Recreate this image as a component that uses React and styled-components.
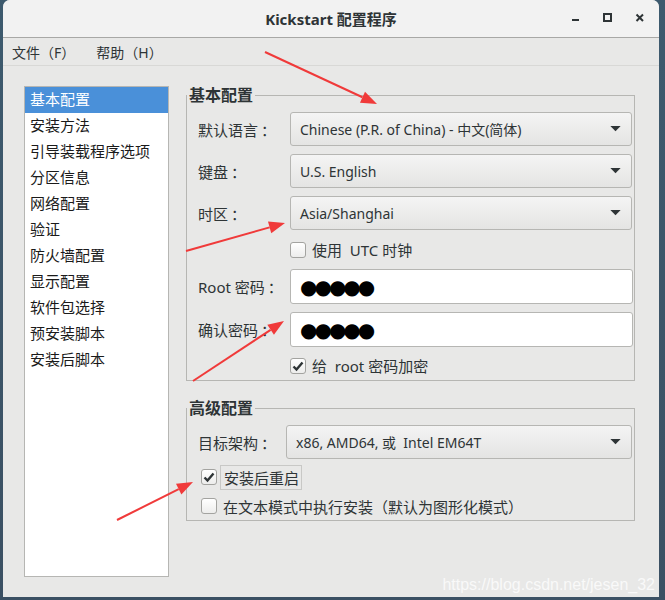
import styled, { createGlobalStyle } from "styled-components"

const GlobalStyle = createGlobalStyle`
  html, body {
    margin: 0;
    padding: 0;
    background: #3b5468;
  }
  body {
    font-family: "Noto Sans", "Noto Sans CJK SC", sans-serif;
    color: #2e3436;
  }
`

const sections = [
  "基本配置", "安装方法", "引导装载程序选项", "分区信息", "网络配置", "验证",
  "防火墙配置", "显示配置", "软件包选择", "预安装脚本", "安装后脚本",
]

export default function App() {
  return (
    <>
      <GlobalStyle />
      <Desktop>
        <Window>
          <TitleBar>
            <Title>Kickstart 配置程序</Title>
            <Controls>
              <ControlButton>
                <svg width="10" height="10" viewBox="0 0 10 10"><rect x="1" y="6" width="7" height="2" fill="#2e3436" /></svg>
              </ControlButton>
              <ControlButton>
                <svg width="10" height="10" viewBox="0 0 10 10"><rect x="1" y="1" width="7" height="7" fill="none" stroke="#2e3436" strokeWidth="2" /></svg>
              </ControlButton>
              <ControlButton>
                <svg width="10" height="10" viewBox="0 0 10 10"><path d="M1.5 1.5 L8 8 M8 1.5 L1.5 8" stroke="#2e3436" strokeWidth="2" /></svg>
              </ControlButton>
            </Controls>
          </TitleBar>

          <MenuBar>
            <MenuItem>文件（F）</MenuItem>
            <MenuItem>帮助（H）</MenuItem>
          </MenuBar>

          <Body>
            <SideList>
              {sections.map((s, i) => (
                <SideItem key={s} $active={i === 0}>{s}</SideItem>
              ))}
            </SideList>

            <Panel>
              <Frame $bottom={4}>
                <Legend>基本配置</Legend>
                <FormGrid $labelWidth={92}>
                  <Label>默认语言<Colon>：</Colon></Label>
                  <Combo>Chinese (P.R. of China) - 中文(简体)<Arrow /></Combo>
                  <Label>键盘<Colon>：</Colon></Label>
                  <Combo>U.S. English<Arrow /></Combo>
                  <Label>时区<Colon>：</Colon></Label>
                  <Combo>Asia/Shanghai<Arrow /></Combo>
                  <span />
                  <CheckRow $height={39}>
                    <CheckBox />
                    <CheckText>使用&nbsp; UTC 时钟</CheckText>
                  </CheckRow>
                  <Label>Root 密码<Colon>：</Colon></Label>
                  <Entry>●●●●●</Entry>
                  <Label>确认密码<Colon>：</Colon></Label>
                  <Entry>●●●●●</Entry>
                  <span />
                  <CheckRow $height={37}>
                    <CheckBox $checked><Tick /></CheckBox>
                    <CheckText>给&nbsp; root 密码加密</CheckText>
                  </CheckRow>
                </FormGrid>
              </Frame>

              <Frame $bottom={0}>
                <Legend>高级配置</Legend>
                <FormGrid $labelWidth={88}>
                  <Label>目标架构<Colon>：</Colon></Label>
                  <Combo>x86, AMD64, 或&nbsp; Intel EM64T<Arrow /></Combo>
                </FormGrid>
                <PlainChecks>
                  <CheckRow $height={30}>
                    <CheckBox $checked><Tick /></CheckBox>
                    <FocusText>安装后重启</FocusText>
                  </CheckRow>
                  <CheckRow $height={28}>
                    <CheckBox />
                    <CheckText>在文本模式中执行安装（默认为图形化模式）</CheckText>
                  </CheckRow>
                </PlainChecks>
              </Frame>
            </Panel>
          </Body>
        </Window>

        <Watermark>https://blog.csdn.net/jesen_32</Watermark>
        <Annotations width="665" height="600" viewBox="0 0 665 600">
          <RedArrow x1={265} y1={52} x2={377} y2={104} />
          <RedArrow x1={186} y1={251} x2={285} y2={223} />
          <RedArrow x1={193} y1={381} x2={284} y2={321} />
          <RedArrow x1={117} y1={520} x2={193} y2={482} />
        </Annotations>
      </Desktop>
    </>
  )
}

function Arrow() {
  return (
    <ArrowIcon width="12" height="7" viewBox="0 0 12 7">
      <path d="M0 0 H12 L6 6 Z" fill="#2e3436" />
    </ArrowIcon>
  )
}

function Tick() {
  return (
    <svg width="12" height="12" viewBox="0 0 12 12">
      <path d="M1.5 6.5 L4.5 9.5 L10.5 2.5" fill="none" stroke="#2e3436" strokeWidth="2.4" />
    </svg>
  )
}

function RedArrow({ x1, y1, x2, y2 }) {
  const ang = Math.atan2(y2 - y1, x2 - x1)
  const len = 16
  const w = 6
  const bx = x2 - Math.cos(ang) * len
  const by = y2 - Math.sin(ang) * len
  const px = -Math.sin(ang) * w
  const py = Math.cos(ang) * w
  return (
    <g>
      <line x1={x1} y1={y1} x2={bx} y2={by} stroke="#f03a3a" strokeWidth="2" />
      <polygon points={`${x2},${y2} ${bx + px},${by + py} ${bx - px},${by - py}`} fill="#f03a3a" />
    </g>
  )
}

const Desktop = styled.div`
  position: relative;
  width: 665px;
  height: 600px;
  padding: 0 6px 3px 3px;
  box-sizing: border-box;
  background: linear-gradient(180deg, #3d5a6e 0%, #3b5063 100%);
  overflow: hidden;
`
const Window = styled.div`
  height: 100%;
  display: flex;
  flex-direction: column;
  background: #e8e8e7;
  border-radius: 7px 7px 0 0;
  overflow: hidden;
`
const TitleBar = styled.div`
  height: 37px;
  flex: none;
  background: #f2f2f2;
  border-bottom: 1px solid #a8a8a6;
  display: flex;
  align-items: center;
  justify-content: center;
  position: relative;
`
const Title = styled.div`
  font-size: 15px;
  font-weight: 700;
  color: #2e3436;
`
const Controls = styled.div`
  position: absolute;
  right: 14px;
  top: 13px;
  display: flex;
  gap: 22px;
`
const ControlButton = styled.div`
  width: 10px;
  height: 10px;
  display: flex;
`
const MenuBar = styled.div`
  height: 27px;
  flex: none;
  display: flex;
  align-items: center;
  gap: 21px;
  padding-left: 9px;
  border-bottom: 1px solid #d8d8d6;
`
const MenuItem = styled.div`
  font-size: 14px;
  color: #2e3436;
`
const Body = styled.div`
  flex: 1;
  display: flex;
  padding: 20px 24px 20px 21px;
  gap: 17px;
`
const SideList = styled.div`
  width: 145px;
  flex: none;
  box-sizing: border-box;
  background: #fff;
  border: 1px solid #b6b6b3;
`
const SideItem = styled.div`
  height: 26px;
  line-height: 25px;
  padding-left: 5px;
  font-size: 15px;
  color: ${(p) => (p.$active ? "#fff" : "#1a1a1a")};
  background: ${(p) => (p.$active ? "#4a90d9" : "transparent")};
`
const Panel = styled.div`
  flex: 1;
  display: flex;
  flex-direction: column;
  gap: 18px;
`
const Frame = styled.fieldset`
  margin: 0;
  padding: 8px 1px ${(p) => p.$bottom}px 11px;
  border: 1px solid #b6b6b3;
  min-width: 0;
`
const Legend = styled.legend`
  padding: 0 2px;
  margin-left: -11px;
  font-size: 16px;
  font-weight: 700;
  color: #2e3436;
  line-height: 18px;
`
const FormGrid = styled.div`
  display: grid;
  grid-template-columns: ${(p) => p.$labelWidth}px 1fr;
  row-gap: 8px;
  align-items: center;
`
const Label = styled.div`
  font-size: 15px;
  color: #2e3436;
`
const Colon = styled.span`
  margin-left: 3px;
`
const Combo = styled.div`
  height: 34px;
  box-sizing: border-box;
  display: flex;
  align-items: center;
  padding: 0 9px;
  border: 1px solid #b6b6b3;
  border-radius: 3px;
  background: linear-gradient(180deg, #f4f4f4 0%, #e4e4e3 100%);
  font-size: 14px;
  color: #2e3436;
  margin-right: 1px;
`
const ArrowIcon = styled.svg`
  margin-left: auto;
  margin-right: 1px;
  width: 11px;
  height: 6px;
`
const Entry = styled.div`
  height: 35px;
  box-sizing: border-box;
  display: flex;
  align-items: center;
  padding: 0 9px;
  background: #fff;
  border: 1px solid #b6b6b3;
  border-radius: 3px;
  font-family: "DejaVu Sans", sans-serif;
  font-size: 20px;
  letter-spacing: -3px;
  color: #000;
`
const CheckRow = styled.div`
  height: ${(p) => p.$height}px;
  display: flex;
  align-items: center;
  gap: 6px;
  margin: -8px 0;
  box-sizing: border-box;
`
const CheckBox = styled.div`
  width: 16px;
  height: 16px;
  box-sizing: border-box;
  border: 1px solid #a3a3a0;
  border-radius: 3px;
  background: linear-gradient(180deg, #ffffff 0%, #ededec 100%);
  display: flex;
  align-items: center;
  justify-content: center;
  flex: none;
`
const CheckText = styled.span`
  font-size: 15px;
  color: #2e3436;
`
const FocusText = styled.span`
  font-size: 15px;
  color: #2e3436;
  border: 1px solid #c8c8c6;
  padding: 1px 2px 1px 3px;
  margin-left: -3px;
`
const PlainChecks = styled.div`
  display: flex;
  flex-direction: column;
  padding-left: 3px;
  margin-top: 3px;
  ${CheckRow} { margin: 0; }
`
const Watermark = styled.div`
  position: absolute;
  right: 10px;
  bottom: 6px;
  font-family: "Liberation Sans", Arial, sans-serif;
  font-size: 16px;
  color: rgba(255, 255, 255, 0.75);
  pointer-events: none;
`
const Annotations = styled.svg`
  position: absolute;
  left: 0;
  top: 0;
  pointer-events: none;
`
